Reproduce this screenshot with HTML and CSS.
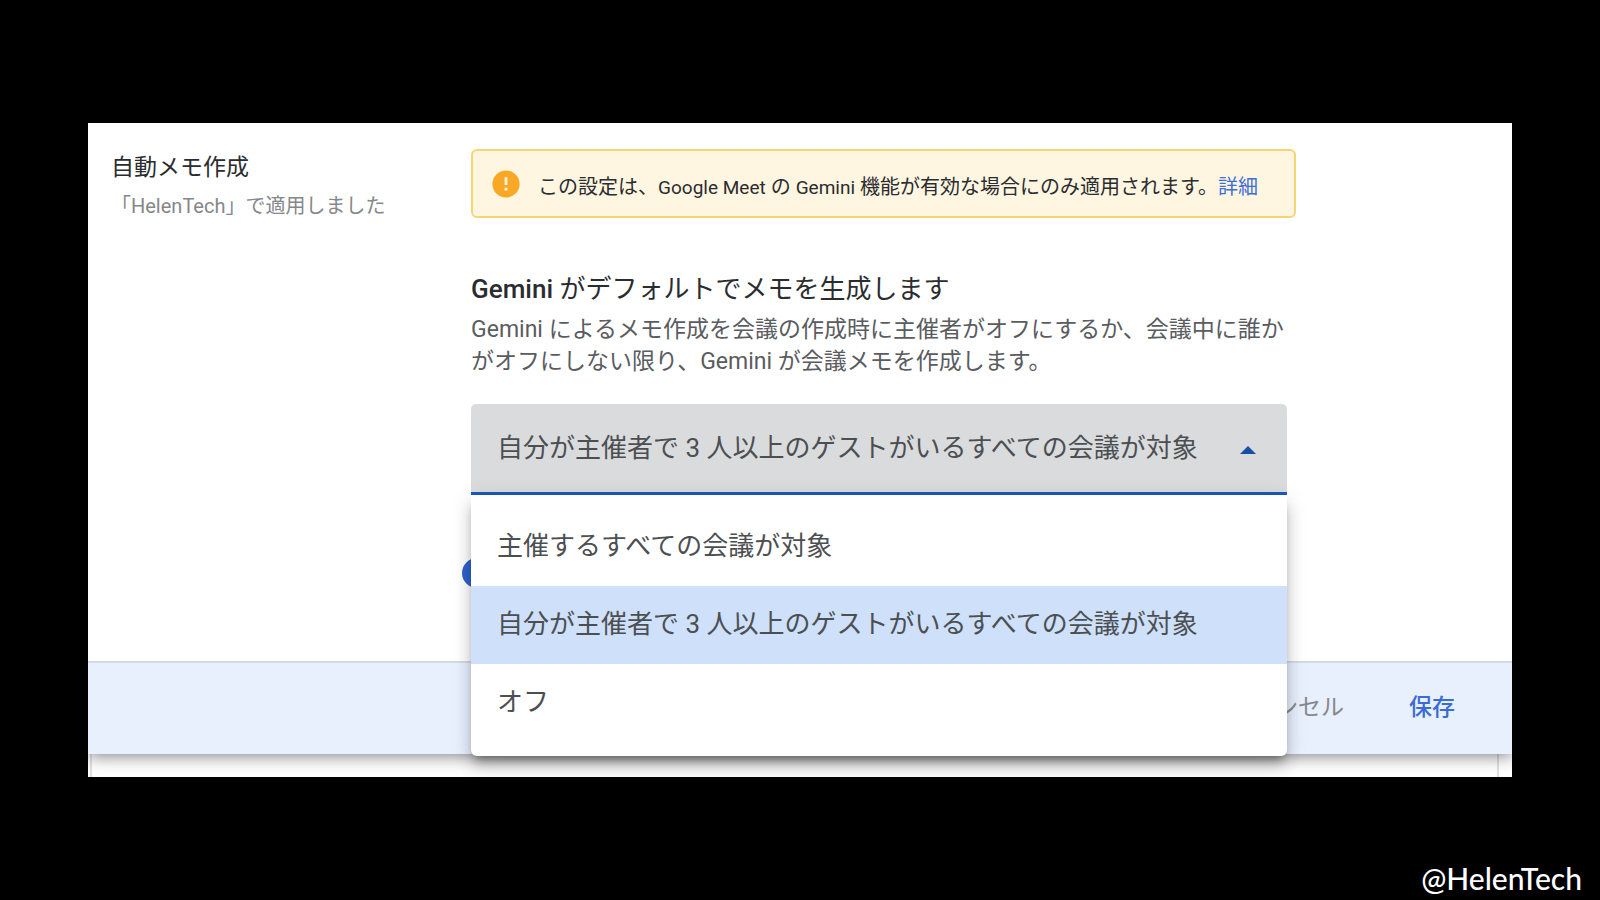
FILE: index.html
```html
<!DOCTYPE html>
<html lang="ja">
<head>
<meta charset="utf-8">
<meta name="viewport" content="width=device-width, initial-scale=1">
<title>自動メモ作成</title>
<link rel="stylesheet" href="styles.css">
</head>
<body>
<main class="panel">
  <section class="setting">
    <header class="setting-name">
      <h1 class="setting-title">自動メモ作成</h1>
      <p class="setting-source">「HelenTech」で適用しました</p>
    </header>
    <div class="setting-body">
      <div class="notice">
        <svg class="notice-icon" viewBox="0 0 28 28" aria-hidden="true">
          <circle cx="14" cy="14" r="13.6" fill="#f9a825"/>
          <path d="M14 7.2v7.8M14 17.8v2.8" stroke="#fef7e0" stroke-width="2.8"/>
        </svg>
        <p class="notice-text">この設定は、<span class="product">Google Meet</span> の <span class="product">Gemini</span> 機能が有効な場合にのみ適用されます。<a class="notice-link" href="#details">詳細</a></p>
      </div>
      <h2 class="option-title"><span class="option-brand">Gemini</span> がデフォルトでメモを生成します</h2>
      <p class="option-text">Gemini によるメモ作成を会議の作成時に主催者がオフにするか、会議中に誰かがオフにしない限り、Gemini が会議メモを作成します。</p>
      <div class="dropdown">
        <select class="dropdown-field" aria-label="Gemini がデフォルトでメモを生成します">
          <option>主催するすべての会議が対象</option>
          <option selected>自分が主催者で 3 人以上のゲストがいるすべての会議が対象</option>
          <option>オフ</option>
        </select>
        <svg class="dropdown-arrow" viewBox="0 0 16 8" aria-hidden="true"><path d="M0 8 8 0l8 8z" fill="#174ea6"/></svg>
        <div class="menu" role="listbox" aria-label="メモの対象">
          <button class="menu-item" type="button" role="option" aria-selected="false">主催するすべての会議が対象</button>
          <button class="menu-item menu-item-selected" type="button" role="option" aria-selected="true">自分が主催者で 3 人以上のゲストがいるすべての会議が対象</button>
          <button class="menu-item" type="button" role="option" aria-selected="false">オフ</button>
        </div>
      </div>
      <input class="switch" type="checkbox" role="switch" checked aria-label="自動メモ作成">
    </div>
  </section>
  <footer class="actions">
    <button class="action" type="button">キャンセル</button>
    <button class="action action-save" type="button">保存</button>
  </footer>
  <div class="next-card"></div>
</main>
<p class="credit">@HelenTech</p>
</body>
</html>
```
FILE: styles.css
```css
* { box-sizing: border-box; }

body {
  margin: 0;
  min-height: 100vh;
  display: flex;
  flex-direction: column;
  justify-content: space-between;
  padding: 123px 0 4px;
  background: #000;
  color: #2b2c2f;
  font-family: Roboto, "Noto Sans CJK JP", sans-serif;
}

h1, h2, p { margin: 0; font-weight: 400; }

button, select { font-family: inherit; }

.panel {
  margin: 0 5.5%;
  background: #fff;
  overflow: hidden;
}

.setting {
  display: grid;
  grid-template-columns: 26.9% 57.9%;
  padding: 26px 0 73px;
}

.setting-name { padding-left: 23px; }

.setting-title {
  font-size: 23px;
  line-height: 38px;
}

.setting-source {
  font-size: 20px;
  line-height: 38px;
  color: #85878a;
}

.notice {
  display: flex;
  align-items: center;
  gap: 18px;
  min-height: 69px;
  padding: 0 19px;
  border: 2px solid #f8d574;
  border-radius: 6px;
  background: #fef6e0;
}

.notice-icon { flex: none; width: 28px; height: 28px; }

.notice-text {
  padding-top: 8px;
  font-size: 20px;
  line-height: 28px;
}

.product { font-size: 19px; }

.notice-link { color: #3f6fd8; text-decoration: none; }

.option-title {
  margin-top: 51px;
  font-size: 26px;
  line-height: 40px;
}

.option-brand { font-weight: 500; }

.option-text {
  margin-top: 5px;
  font-size: 23px;
  line-height: 32px;
  color: #5a5c5f;
}

.dropdown {
  position: relative;
  margin: 26px 9px 0 0;
}

.dropdown-field {
  display: block;
  width: 100%;
  height: 91px;
  padding: 0 60px 0 26px;
  border: 0;
  border-bottom: 3px solid #185abc;
  border-radius: 5px 5px 0 0;
  appearance: none;
  background: #dadbdd;
  color: #4c4f52;
  font-size: 26px;
}

.dropdown-arrow {
  position: absolute;
  top: 42px;
  right: 31px;
  width: 16px;
  height: 8px;
}

.menu {
  position: absolute;
  z-index: 1;
  top: 100%;
  left: 0;
  right: 0;
  padding: 13px 0 14px;
  border-radius: 0 0 6px 6px;
  background: #fff;
  box-shadow: 0 8px 8px -4px rgba(0, 0, 0, .3), 0 12px 16px rgba(0, 0, 0, .14), 0 4px 22px rgba(0, 0, 0, .12);
}

.menu-item {
  display: block;
  width: 100%;
  height: 78px;
  padding: 0 26px 8px;
  border: 0;
  background: transparent;
  color: #4c4f52;
  font-size: 26px;
  text-align: left;
}

.menu-item-selected { background: #cee0fa; }

.switch {
  display: block;
  width: 30px;
  height: 30px;
  margin: 63px 0 0 -9px;
  border-radius: 50%;
  appearance: none;
  background: #2f62cc;
}

.actions {
  position: relative;
  display: flex;
  justify-content: flex-end;
  align-items: center;
  gap: 65px;
  height: 93px;
  padding: 0 57px 8px 0;
  border-top: 2px solid #d3dae6;
  background: #e8f0fe;
  box-shadow: 0 2px 16px rgba(0, 0, 0, .5);
  clip-path: inset(0 0 -40px);
}

.action {
  padding: 0;
  border: 0;
  background: transparent;
  color: #85888c;
  font-size: 23px;
}

.action-save { color: #3a6bd6; font-weight: 500; }

.next-card {
  height: 23px;
  margin: 0 13px 0 2px;
  border: solid #e0e0e0;
  border-width: 0 2px;
}

.credit {
  padding-right: 18px;
  color: #fff;
  font-family: Lato, sans-serif;
  font-size: 30px;
  font-weight: 500;
  line-height: 36px;
  text-align: right;
}
```
